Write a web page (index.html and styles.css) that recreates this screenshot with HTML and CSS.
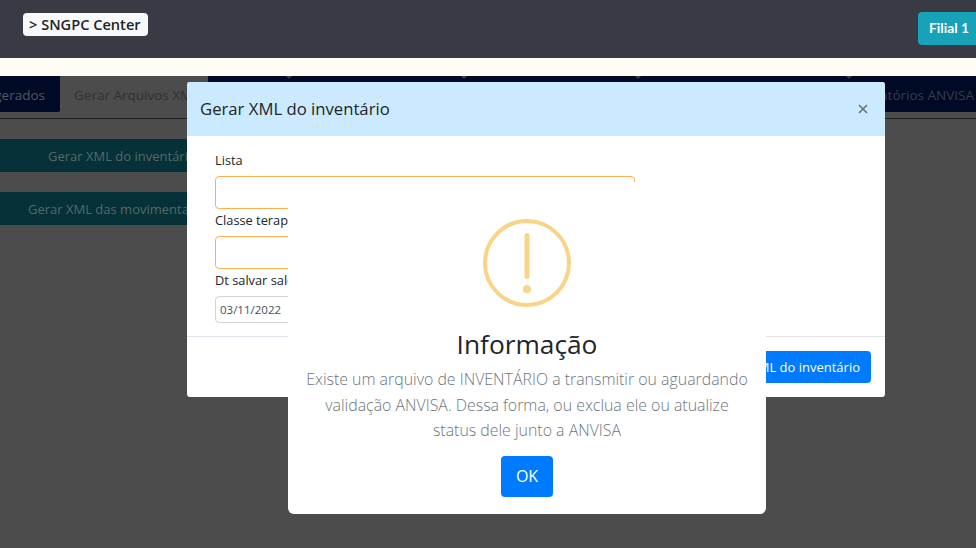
FILE: index.html
```html
<!DOCTYPE html>
<html lang="pt-BR">
<head>
    <meta charset="UTF-8">
    <meta name="viewport" content="width=device-width, initial-scale=1.0">
    <title>SNGPC Center</title>
    <link rel="stylesheet" href="styles.css">
</head>
<body>

    <header class="topbar">
        <a class="brand">&gt; SNGPC Center</a>
        <button class="btn-filial">Filial 1</button>
    </header>
    <div class="band"></div>

    <main class="page">
        <!-- abas -->
        <nav class="tabs">
            <div class="tab tab-first">Arquivos gerados</div>
            <div class="tab tab-active">Gerar Arquivos XML</div>
            <div class="tab tab-rest">
                <i class="caret caret-1"></i>
                <i class="caret caret-2"></i>
                <i class="caret caret-3"></i>
                <i class="caret caret-4"></i>
                Relatórios ANVISA
            </div>
        </nav>
        <div class="actions">
            <div class="action">Gerar XML do inventário</div>
            <div class="action">Gerar XML das movimentações</div>
        </div>

        <!-- modal do inventário -->
        <section class="modal">
            <div class="modal-header">
                <h2>Gerar XML do inventário</h2>
                <svg class="close" width="10" height="10" viewBox="0 0 10 10">
                    <path d="M1 1 L9 9 M9 1 L1 9" stroke="#6d757c" stroke-width="1.7" fill="none"/>
                </svg>
            </div>
            <div class="modal-body">
                <label>Lista</label>
                <div class="input input-warn"></div>
                <label>Classe terapêutica</label>
                <div class="input input-warn"></div>
                <label>Dt salvar saldo</label>
                <div class="input input-date">03/11/2022</div>
            </div>
            <div class="modal-footer">
                <button class="btn-primary">Gerar XML do inventário</button>
            </div>
        </section>

        <!-- alerta -->
        <section class="alert">
            <svg class="alert-icon" width="88" height="88" viewBox="0 0 88 88">
                <circle cx="44" cy="44" r="42" fill="none" stroke="#f8d486" stroke-width="4"/>
                <line x1="44" y1="16.5" x2="44" y2="57.5" stroke="#f8d486" stroke-width="5" stroke-linecap="round"/>
                <circle cx="44" cy="70" r="4" fill="#f8d486"/>
            </svg>
            <h1>Informação</h1>
            <p>Existe um arquivo de INVENTÁRIO a transmitir ou aguardando validação ANVISA. Dessa forma, ou exclua ele ou atualize status dele junto a ANVISA</p>
            <button class="btn-ok">OK</button>
        </section>
    </main>

</body>
</html>
```

FILE: styles.css
```css
* {
    box-sizing: border-box;
}

body {
    margin: 0;
    height: 548px;
    overflow: hidden;
    font-family: 'Open Sans', 'Noto Sans', sans-serif;
    background-color: #4c4c4c;
}

/* --- topo --- */
.topbar {
    height: 58px;
    background-color: #383b43;
    display: flex;
    justify-content: space-between;
    align-items: flex-start;
    padding-left: 23px;
}

.brand {
    margin-top: 13px;
    width: 125px;
    height: 23px;
    line-height: 23px;
    padding-left: 6px;
    background-color: #f8f9fa;
    border-radius: 4px;
    color: #212529;
    font-size: 14.6px;
    font-weight: 600;
    white-space: nowrap;
}

.btn-filial {
    margin-top: 12px;
    width: 58px;
    height: 33px;
    padding: 0 0 2px 11px;
    text-align: left;
    border: 0;
    border-radius: 4px 0 0 4px;
    background-color: #17a2b8;
    color: #fff;
    font-family: Lato, sans-serif;
    font-size: 13.8px;
    font-weight: 700;
    white-space: nowrap;
}

.band {
    height: 18px;
    background-color: #fffcf5;
}

/* --- pagina atras do modal --- */
.page {
    position: relative;
    height: 472px;
    background-color: #4c4c4c;
}

.tabs {
    display: flex;
    height: 43px;
    border-bottom: 1px solid #1c1e20;
    padding-bottom: 6px;
}

.tab {
    height: 36px;
    line-height: 38px;
    font-size: 13.5px;
    white-space: nowrap;
}

.tab-first {
    width: 60px;
    padding-right: 15px;
    background-color: #000926;
    color: #55585e;
    border-bottom-right-radius: 2px;
    direction: rtl;
    overflow: hidden;
}

.tab-active {
    width: 148px;
    padding-left: 14px;
    color: #2f3236;
    overflow: hidden;
}

.tab-rest {
    position: relative;
    flex: 1;
    padding-right: 2px;
    text-align: right;
    background-color: #000926;
    color: #3b3e44;
}

.caret {
    position: absolute;
    top: 0;
    width: 0;
    height: 0;
    border: 3px solid transparent;
    border-top-color: #3b3e44;
    border-bottom: 0;
}

.caret-1 { left: 78px; }
.caret-2 { left: 253px; }
.caret-3 { left: 427px; }
.caret-4 { left: 638px; }

.actions {
    display: flex;
    flex-direction: column;
    gap: 20px;
    padding-top: 20px;
}

.action {
    width: 300px;
    height: 33px;
    padding-left: 48px;
    line-height: 34px;
    background-color: #073138;
    color: #53686b;
    font-size: 13px;
    white-space: nowrap;
}

.action + .action {
    padding-left: 28px;
}

/* --- modal --- */
.modal {
    position: absolute;
    left: 187px;
    top: 6px;
    width: 698px;
    height: 315px;
    background-color: #fff;
    border-radius: 3px;
    overflow: hidden;
}

.modal-header {
    height: 54px;
    padding: 0 17px 0 13px;
    display: flex;
    justify-content: space-between;
    align-items: center;
    background-color: #cceaff;
    border-bottom: 1px solid #e2e6ea;
}

.modal-header h2 {
    margin: 0;
    font-size: 16.7px;
    font-weight: 500;
    color: #212529;
}

.modal-body {
    height: 201px;
    padding: 15px 250px 0 28px;
    border-bottom: 1px solid #e3e3ec;
}

.modal-body label {
    display: block;
    height: 27px;
    font-size: 12.8px;
    line-height: 22px;
    color: #212529;
    white-space: nowrap;
}

.modal-body label:first-child {
    height: 25px;
    line-height: 18px;
}

.input {
    height: 33px;
    border-radius: 4px;
}

.input-warn {
    border: 1px solid #ffad4d;
}

.input-date {
    width: 110px;
    height: 27px;
    padding-left: 4px;
    border: 1px solid #ced4da;
    font-size: 11.5px;
    line-height: 25px;
    color: #495057;
}

.modal-footer {
    display: flex;
    justify-content: flex-end;
    padding: 14px 14px 0 0;
}

.btn-primary {
    height: 32px;
    padding: 0 11px;
    border: 0;
    border-radius: 4px;
    background-color: #007bff;
    color: #fff;
    font-family: inherit;
    font-size: 13px;
    font-weight: 500;
    white-space: nowrap;
}

/* --- alerta --- */
.alert {
    position: absolute;
    left: 288px;
    top: 106px;
    width: 478px;
    height: 332px;
    padding-top: 37px;
    background-color: #fff;
    border-radius: 0 0 6px 6px;
    text-align: center;
}

.alert-icon {
    display: block;
    margin: 0 auto;
}

.alert h1 {
    margin: 19px 0 0;
    font-size: 26.3px;
    line-height: 36px;
    font-weight: 500;
    color: #212529;
}

.alert p {
    margin: 5px 0 0;
    padding: 0 16px;
    font-size: 15.9px;
    font-weight: 300;
    line-height: 25.6px;
    color: #6c757d;
}

.btn-ok {
    margin-top: 12px;
    width: 52px;
    height: 41px;
    border: 0;
    border-radius: 4px;
    background-color: #007bff;
    color: #fff;
    font-family: inherit;
    font-size: 16px;
}
```
